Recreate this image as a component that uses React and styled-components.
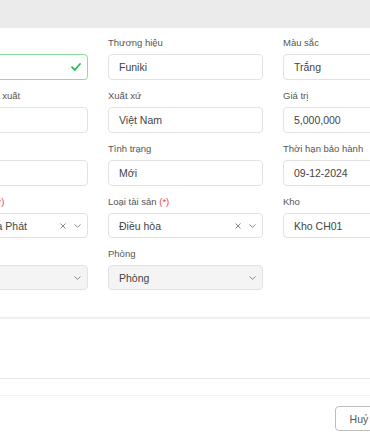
import styled, { createGlobalStyle } from "styled-components";

const Global = createGlobalStyle`
  html, body {
    margin: 0;
    padding: 0;
    background: #fff;
    overflow: hidden;
    font-family: "Liberation Sans", Arial, sans-serif;
  }
`;

const Modal = styled.div`
  width: 537px;
  margin-left: -83px;
  background: #fff;
`;

const TopBar = styled.div`
  height: 28px;
  background: #ebebeb;
`;

const Body = styled.div`
  padding: 7px 16px 19px;
  border-bottom: 2px solid #f0f0f0;
`;

const Grid = styled.div`
  display: grid;
  grid-template-columns: repeat(3, 155px);
  column-gap: 20px;
`;

const Item = styled.div`
  display: flex;
  flex-direction: column;
  margin-bottom: 8px;
`;

const Label = styled.div`
  font-size: 9.5px;
  line-height: 16px;
  height: 16px;
  color: #555;
  white-space: nowrap;
  margin-bottom: 3px;
`;

const Req = styled.span`
  color: #f0443e;
`;

const Control = styled.div`
  display: flex;
  align-items: center;
  box-sizing: border-box;
  height: ${(p) => (p.$select ? 25 : 26)}px;
  padding: 0 6px 0 10px;
  border: 1px solid ${(p) => (p.$valid ? "#86dea0" : "#e2e2e2")};
  border-radius: 4px;
  background: ${(p) => (p.$disabled ? "#f4f4f4" : "#fff")};
  font-size: 10.5px;
  color: #444;
`;

const Value = styled.span`
  flex: 1;
  white-space: nowrap;
  overflow: hidden;
`;

const Icons = styled.span`
  display: flex;
  align-items: center;
  gap: 8px;
  color: #999;
`;

const Section = styled.div`
  height: 59px;
  border-bottom: 1px solid #e6e6e6;
`;

const Spacer = styled.div`
  height: 16px;
  border-bottom: 1px solid #f2f2f2;
`;

const Footer = styled.div`
  display: flex;
  justify-content: flex-end;
  gap: 8px;
  padding: 10px 14px;
`;

const Button = styled.button`
  box-sizing: border-box;
  height: 25px;
  padding: 0 14px;
  border: 1px solid #bdbdbd;
  border-radius: 4px;
  background: #fff;
  font-family: inherit;
  font-size: 10.5px;
  color: #555;
`;

const Check = () => (
  <svg width="10" height="8" viewBox="0 0 10 8">
    <path d="M1 4.2 L3.8 7 L9 1" fill="none" stroke="#2fb85a" strokeWidth="1.8" strokeLinecap="round" strokeLinejoin="round" />
  </svg>
);

const Clear = () => (
  <svg width="6" height="6" viewBox="0 0 6 6">
    <path d="M0.5 0.5 L5.5 5.5 M5.5 0.5 L0.5 5.5" stroke="#888" strokeWidth="1" />
  </svg>
);

const Chevron = () => (
  <svg width="7" height="4" viewBox="0 0 7 4">
    <path d="M0.5 0.5 L3.5 3.3 L6.5 0.5" fill="none" stroke="#888" strokeWidth="1" />
  </svg>
);

function Field({ label, required, value, valid, select, clear, disabled }) {
  return (
    <Item>
      <Label>
        {label}
        {required && <Req> (*)</Req>}
      </Label>
      <Control $valid={valid} $select={select} $disabled={disabled}>
        <Value>{value}</Value>
        {valid && <Check />}
        {select && (
          <Icons>
            {clear && <Clear />}
            <Chevron />
          </Icons>
        )}
      </Control>
    </Item>
  );
}

export default function App() {
  return (
    <Modal>
      <Global />
      <TopBar />
      <Body>
        <Grid>
          <Field label="Tên tài sản" value="Điều hòa" valid />
          <Field label="Thương hiệu" value="Funiki" />
          <Field label="Màu sắc" value="Trắng" />

          <Field label="Ngày tháng sản xuất" value="2024" />
          <Field label="Xuất xứ" value="Việt Nam" />
          <Field label="Giá trị" value="5,000,000" />

          <Field label="Số lượng" value="1" />
          <Field label="Tình trạng" value="Mới" />
          <Field label="Thời hạn bảo hành" value="09-12-2024" />

          <Field label="Nhà cung cấp" required value="Nội thất Hòa Phát" select clear />
          <Field label="Loại tài sản" required value="Điều hòa" select clear />
          <Field label="Kho" value="Kho CH01" select clear />

          <Field label="Tầng" value="" select disabled />
          <Field label="Phòng" value="Phòng" select disabled />
        </Grid>
      </Body>
      <Section />
      <Spacer />
      <Footer>
        <Button>Huỷ</Button>
        <Button>Lưu</Button>
      </Footer>
    </Modal>
  );
}
